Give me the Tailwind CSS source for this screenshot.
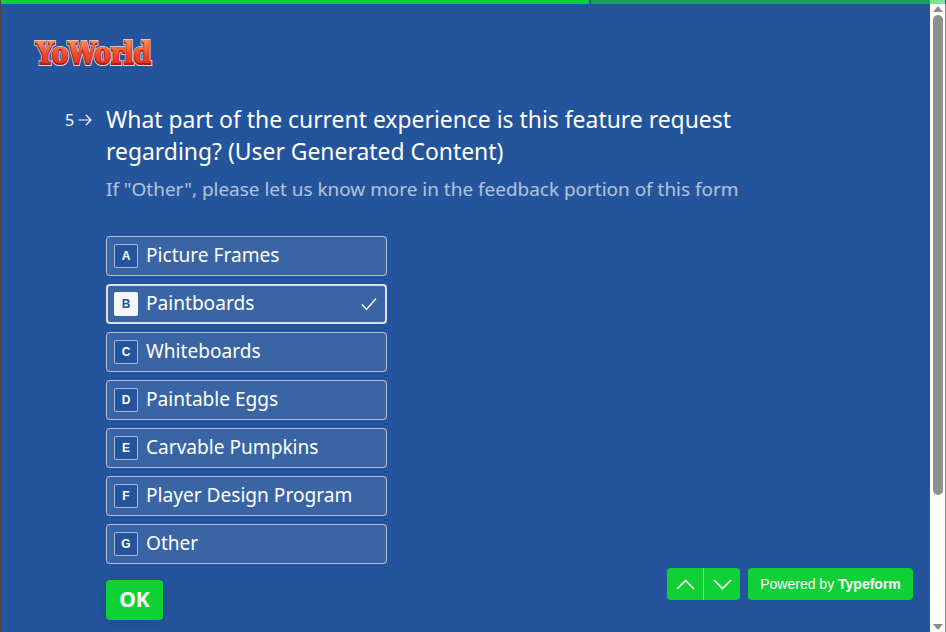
<!DOCTYPE html>
<html lang="en">
<head>
  <meta charset="UTF-8" />
  <title>YoWorld feature request</title>
  <script src="https://cdn.jsdelivr.net/npm/@tailwindcss/browser@4"></script>
</head>
<body class="bg-[#24549b] overflow-hidden">
  <div class="relative h-[632px] w-[946px] overflow-hidden font-['Noto_Sans',sans-serif] text-white border-l border-[#4a4a4a]">

    <!-- progress -->
    <div class="flex h-1">
      <div class="w-[588px] bg-[#0fd136]"></div>
      <div class="w-[2px] bg-[#24549b]"></div>
      <div class="w-[339px] bg-[#1f9e63]"></div>
      <div class="w-[15px] bg-[#7de396]"></div>
    </div>

    <main class="pl-[32px] pt-[30px]">
      <svg class="h-[36px] w-[124px] block" viewBox="0 0 124 36">
        <defs>
          <linearGradient id="logo" x1="0" y1="0" x2="0" y2="1">
            <stop offset="0.15" stop-color="#fb9156" />
            <stop offset="0.55" stop-color="#f0492b" />
            <stop offset="1" stop-color="#d8221f" />
          </linearGradient>
        </defs>
        <g font-family="DejaVu Serif" font-weight="bold" font-size="24" transform="scale(1 1.22)">
          <text x="3" y="24.6" textLength="115" lengthAdjust="spacingAndGlyphs" fill="#dcd6d9" stroke="#dcd6d9" stroke-width="3.4">YoWorld</text>
          <text x="3" y="24.6" textLength="115" lengthAdjust="spacingAndGlyphs" fill="#a3161a" stroke="#a3161a" stroke-width="1.8">YoWorld</text>
          <text x="3" y="23.8" textLength="115" lengthAdjust="spacingAndGlyphs" fill="url(#logo)" stroke="url(#logo)" stroke-width="0.6">YoWorld</text>
        </g>
      </svg>

      <div class="mt-[34px] flex pl-[32px]">
        <div class="flex w-[41px] h-[32px] items-center text-[16px] gap-[4px]">
          <span>5</span>
          <svg class="h-[12px] w-[14px]" viewBox="0 0 14 12" fill="none" stroke="white" stroke-width="1.2"><path d="M0.5 6H13M8 1l5 5-5 5" /></svg>
        </div>
        <div>
          <h1 class="text-[22.9px] leading-[32px] w-[680px]">What part of the current experience is this feature request regarding? (User Generated Content)</h1>
          <p class="mt-[8px] text-[18.95px] leading-[26px] text-white/65">If "Other", please let us know more in the feedback portion of this form</p>

          <div class="mt-[34px] flex w-[281px] flex-col gap-2">
            <div class="flex h-10 items-center rounded-[4px] border border-white/60 bg-white/10 pl-[7px] text-[19.1px]">
              <span class="mr-2 flex h-6 w-6 items-center justify-center rounded-[2px] border border-white/60 bg-[#24549b] font-['Liberation_Sans',sans-serif] text-[12px] font-bold">A</span><span class="-translate-y-px">Picture Frames</span>
            </div>
            <div class="flex h-10 items-center rounded-[4px] border-2 border-white/80 bg-white/10 pl-[6px] pr-[8px] text-[19.1px]">
              <span class="mr-2 flex h-6 w-6 items-center justify-center rounded-[2px] bg-[#f4f6fa] font-['Liberation_Sans',sans-serif] text-[12px] font-bold text-[#24549b]">B</span><span class="-translate-y-px">Paintboards</span>
              <svg class="ml-auto h-[14px] w-[16px]" viewBox="0 0 16 14" fill="none" stroke="white" stroke-width="1.3"><path d="M1 7.5l4.5 5L15 1.5" /></svg>
            </div>
            <div class="flex h-10 items-center rounded-[4px] border border-white/60 bg-white/10 pl-[7px] text-[19.1px]">
              <span class="mr-2 flex h-6 w-6 items-center justify-center rounded-[2px] border border-white/60 bg-[#24549b] font-['Liberation_Sans',sans-serif] text-[12px] font-bold">C</span><span class="-translate-y-px">Whiteboards</span>
            </div>
            <div class="flex h-10 items-center rounded-[4px] border border-white/60 bg-white/10 pl-[7px] text-[19.1px]">
              <span class="mr-2 flex h-6 w-6 items-center justify-center rounded-[2px] border border-white/60 bg-[#24549b] font-['Liberation_Sans',sans-serif] text-[12px] font-bold">D</span><span class="-translate-y-px">Paintable Eggs</span>
            </div>
            <div class="flex h-10 items-center rounded-[4px] border border-white/60 bg-white/10 pl-[7px] text-[19.1px]">
              <span class="mr-2 flex h-6 w-6 items-center justify-center rounded-[2px] border border-white/60 bg-[#24549b] font-['Liberation_Sans',sans-serif] text-[12px] font-bold">E</span><span class="-translate-y-px">Carvable Pumpkins</span>
            </div>
            <div class="flex h-10 items-center rounded-[4px] border border-white/60 bg-white/10 pl-[7px] text-[19.1px]">
              <span class="mr-2 flex h-6 w-6 items-center justify-center rounded-[2px] border border-white/60 bg-[#24549b] font-['Liberation_Sans',sans-serif] text-[12px] font-bold">F</span><span class="-translate-y-px">Player Design Program</span>
            </div>
            <div class="flex h-10 items-center rounded-[4px] border border-white/60 bg-white/10 pl-[7px] text-[19.1px]">
              <span class="mr-2 flex h-6 w-6 items-center justify-center rounded-[2px] border border-white/60 bg-[#24549b] font-['Liberation_Sans',sans-serif] text-[12px] font-bold">G</span><span class="-translate-y-px">Other</span>
            </div>
          </div>

          <button class="mt-4 h-10 w-[57px] rounded-[4px] bg-[#0fd136] text-[21px] font-bold shadow-[0_3px_12px_rgba(0,0,0,0.1)]">OK</button>
        </div>
      </div>
    </main>

    <!-- typeform footer -->
    <div class="absolute left-[666px] top-[568px] flex gap-2">
      <div class="flex h-8 w-[73px] rounded-[4px] bg-[#0fd136]">
        <div class="flex flex-1 items-center justify-center border-r border-white/40">
          <svg class="h-[11px] w-[19px]" viewBox="0 0 19 11" fill="none" stroke="white" stroke-width="1.7"><path d="M1 10l8.5-8.5L18 10" /></svg>
        </div>
        <div class="flex flex-1 items-center justify-center">
          <svg class="h-[11px] w-[19px]" viewBox="0 0 19 11" fill="none" stroke="white" stroke-width="1.7"><path d="M1 1l8.5 8.5L18 1" /></svg>
        </div>
      </div>
      <div class="flex h-8 w-[165px] items-center justify-center rounded-[4px] bg-[#0fd136] font-['Liberation_Sans',sans-serif] text-[14px]">
        Powered by&nbsp;<b>Typeform</b>
      </div>
    </div>

    <!-- scrollbar -->
    <div class="absolute right-0 top-1 flex h-[628px] w-4 flex-col items-center border-r border-[#8a8a8a] bg-white">
      <div class="mt-[2px] h-0 w-0 border-x-[5px] border-b-[6px] border-x-transparent border-b-[#8a8a8a]"></div>
      <div class="mt-[3px] h-[480px] w-[10px] rounded-[5px] bg-[#8f8f8f]"></div>
      <div class="mt-auto mb-[2px] h-0 w-0 border-x-[5px] border-t-[6px] border-x-transparent border-t-[#8a8a8a]"></div>
    </div>
  </div>
</body>
</html>
